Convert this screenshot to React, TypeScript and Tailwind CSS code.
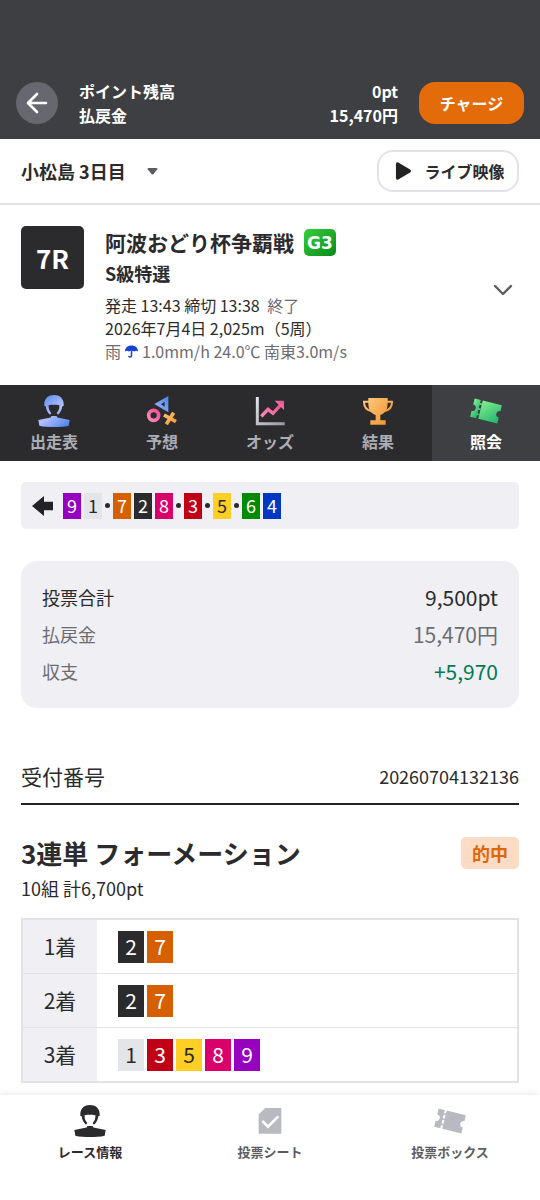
import { useState } from "react"
import clsx from "clsx"

const chipColors: Record<number, string> = {
    1: "bg-[#e4e5e9] text-[#2b2b2d]",
    2: "bg-[#2b2b2d] text-white",
    3: "bg-[#c00015] text-white",
    4: "bg-[#0037c4] text-white",
    5: "bg-[#ffcf26] text-[#2b2b2d]",
    6: "bg-[#008a00] text-white",
    7: "bg-[#d65f00] text-white",
    8: "bg-[#d9006c] text-white",
    9: "bg-[#9600be] text-white",
}

// riders who run side by side share a group
const lineup = [[9, 1], [7, 2, 8], [3], [5], [6, 4]]

const formation = [
    { label: "1着", riders: [2, 7] },
    { label: "2着", riders: [2, 7] },
    { label: "3着", riders: [1, 3, 5, 8, 9] },
]

function RiderIcon({ fill }: { fill: string }) {
    return (
        <svg className="size-8" viewBox="0 0 96 96" fill={fill} aria-hidden="true">
            <path d="M19 33V27C19 10 32 0 48 0s29 10 29 27v6l-5 1c-7-4-16-5-24-5s-17 1-24 5Z" />
            <path d="M23 31h9c-1 10 2 17 8 23l-4 5C29 54 23 43 23 31ZM73 31h-9c1 10-2 17-8 23l4 5c7-5 13-16 13-28Z" />
            <path d="M1 75l33-7 5-1 1-4h16l1 4 5 1 33 7-3 17c-12 3-29 4-44 4S16 95 4 92Z" />
        </svg>
    )
}

function TicketIcon({ fill }: { fill: string }) {
    return (
        <svg className="size-8" viewBox="0 0 96 96" fill={fill} aria-hidden="true">
            <g transform="rotate(14 48 48)">
                <path d="M6 20h19v56H6V58a10 10 0 0 0 0-20Z" />
                <path d="M31 20h59v18a10 10 0 0 0 0 20v18H31Z" />
                <path d="M24 29h8v5h-8ZM24 45h8v5h-8ZM24 61h8v5h-8Z" />
            </g>
        </svg>
    )
}

function ForecastIcon() {
    return (
        <svg className="size-8" viewBox="0 0 96 96" fill="none" aria-hidden="true">
            <path d="M25 27L67 3v49ZM45 28l11 7V20Z" fill="url(#blue)" fillRule="evenodd" />
            <circle cx="23" cy="61" r="15" stroke="url(#pink)" strokeWidth="11" />
            <path d="M54 60l36 20M83 53L61 88" stroke="url(#orange)" strokeWidth="11" />
        </svg>
    )
}

function OddsIcon() {
    return (
        <svg className="size-8" viewBox="0 0 96 96" fill="none" aria-hidden="true">
            <path d="M10 6v80h82" stroke="url(#silver)" strokeWidth="9" />
            <path d="M22 64l20-21 15 12 24-26" stroke="url(#pink)" strokeWidth="10" />
            <path d="M62 17h28v28Z" fill="url(#pink)" />
        </svg>
    )
}

function TrophyIcon() {
    return (
        <svg className="size-8" viewBox="0 0 96 96" fill="none" aria-hidden="true">
            <path d="M22 20H6c0 18 7 25 22 28M74 20h16c0 18-7 25-22 28" stroke="url(#orange)" strokeWidth="6" />
            <path d="M19 9h58v14c0 20-6 31-22 37v16h16v13H25V76h16V60C25 54 19 43 19 23Z" fill="url(#orange)" />
        </svg>
    )
}

function SheetIcon() {
    return (
        <svg className="size-8" viewBox="0 0 96 96" fill="none" aria-hidden="true">
            <path d="M34 9h48v77H14V28Z" fill="#b9b9c2" />
            <path d="M25 48l17 17 31-31" stroke="white" strokeWidth="8" />
        </svg>
    )
}

function Gradients() {
    return (
        <svg className="absolute size-0" aria-hidden="true">
            <defs>
                <linearGradient id="blue" x1="1" y1="0" x2="0" y2="1">
                    <stop stopColor="#4a83ee" />
                    <stop offset="1" stopColor="#a9b8ff" />
                </linearGradient>
                <linearGradient id="rider" gradientUnits="userSpaceOnUse" x1="10" y1="10" x2="80" y2="96">
                    <stop stopColor="#5c8df0" />
                    <stop offset="0.5" stopColor="#b4c0ff" />
                    <stop offset="1" stopColor="#5486ee" />
                </linearGradient>
                <linearGradient id="pink" x1="0" y1="1" x2="1" y2="0">
                    <stop stopColor="#ff8fb5" />
                    <stop offset="1" stopColor="#f04c92" />
                </linearGradient>
                <linearGradient id="orange" x1="0" y1="0" x2="1" y2="1">
                    <stop stopColor="#ffc67a" />
                    <stop offset="1" stopColor="#ef9530" />
                </linearGradient>
                <linearGradient id="silver" x1="0" y1="0" x2="1" y2="1">
                    <stop stopColor="#e4e4ea" />
                    <stop offset="1" stopColor="#9b9ba6" />
                </linearGradient>
                <linearGradient id="green" x1="0" y1="0" x2="1" y2="1">
                    <stop stopColor="#86ee8e" />
                    <stop offset="1" stopColor="#1fb36e" />
                </linearGradient>
            </defs>
        </svg>
    )
}

const tabs = [
    { label: "出走表", icon: <RiderIcon fill="url(#rider)" /> },
    { label: "予想", icon: <ForecastIcon /> },
    { label: "オッズ", icon: <OddsIcon /> },
    { label: "結果", icon: <TrophyIcon /> },
    { label: "照会", icon: <TicketIcon fill="url(#green)" /> },
]

const navItems = [
    { label: "レース情報", icon: <RiderIcon fill="#2b2b2d" />, active: true },
    { label: "投票シート", icon: <SheetIcon />, active: false },
    { label: "投票ボックス", icon: <TicketIcon fill="#b9b9c2" />, active: false },
]

export default function App() {
    const [tab, setTab] = useState("照会")

    return (
        <div className="flex min-h-screen flex-col bg-white font-['Noto_Sans_CJK_JP',sans-serif] text-[#2b2b2d]">
            <Gradients />

            <header className="flex items-center bg-[#3e3f43] px-4 pt-[79px] pb-3 text-white">
                <button aria-label="戻る" className="flex size-[42px] shrink-0 items-center justify-center rounded-full bg-[#67676f]">
                    <svg className="size-6" viewBox="0 0 24 24" fill="none" stroke="currentColor" strokeWidth="2.6" strokeLinecap="round" strokeLinejoin="round">
                        <path d="M21 12H3.500M12 3l-9 9 9 9" />
                    </svg>
                </button>
                <dl className="ml-[21px] grow text-[16px] leading-6 font-bold">
                    <div className="flex justify-between">
                        <dt>ポイント残高</dt>
                        <dd>0pt</dd>
                    </div>
                    <div className="flex justify-between">
                        <dt>払戻金</dt>
                        <dd>15,470円</dd>
                    </div>
                </dl>
                <button className="ml-[21px] h-[42px] w-[105px] rounded-2xl bg-[#e36b09] text-[16px] font-bold">チャージ</button>
            </header>

            <div className="flex items-center justify-between border-b-2 border-[#e2e2e7] px-[21px] py-[11px]">
                <label className="relative flex items-center">
                    <select aria-label="開催日" className="appearance-none bg-transparent pr-9 text-[18px] leading-7 font-bold">
                        <option>小松島 3日目</option>
                    </select>
                    <svg className="pointer-events-none absolute right-1 h-[7px] w-[11px]" viewBox="0 0 12 8">
                        <path d="M1.500 0h9q1.500 0 1 1.500L7 7q-1 1-2 0L.500 1.500Q0 0 1.500 0Z" fill="#5c5c63" />
                    </svg>
                </label>
                <button className="flex h-[42px] w-[142px] items-center justify-center gap-3 rounded-2xl border-2 border-[#e2e2ea] pl-1 text-[16px] font-bold">
                    <svg className="h-5 w-[17px]" viewBox="0 0 18 20">
                        <path d="M1 2.500Q1 0 3.500 1L16 8.500q2 1.500 0 3L3.500 19Q1 20 1 17.500Z" fill="#222224" />
                    </svg>
                    ライブ映像
                </button>
            </div>

            <section className="flex items-start px-[21px] pt-[21px] pb-[22px]">
                <div className="flex size-[63px] shrink-0 items-center justify-center rounded-[5px] bg-[#2b2b2d] text-[26px] font-bold text-white">7R</div>
                <div className="ml-[21px] grow">
                    <div className="flex items-center gap-[10px]">
                        <h1 className="text-[21px] leading-[33px] font-bold">阿波おどり杯争覇戦</h1>
                        <span className="flex h-[27px] w-8 items-center justify-center rounded-[5px] bg-linear-to-br from-[#35cf3a] to-[#078a1c] pt-[2px] font-['DejaVu_Sans',sans-serif] text-[17px] font-bold text-white">G3</span>
                    </div>
                    <h2 className="text-[18px] leading-7 font-bold">S級特選</h2>
                    <div className="mt-[7px] text-[16px] leading-[23px]">
                        <p>発走 13:43 締切 13:38 <span className="ml-1 text-[#6c6c73]">終了</span></p>
                        <p>2026年7月4日 2,025m（5周）</p>
                        <p className="flex items-center gap-1 text-[#6c6c73]">
                            雨
                            <svg className="size-[13px]" viewBox="0 0 26 26">
                                <path d="M0 13C0 5 6 1 13 1s13 4 13 12c-3-2-5-2-7 0-4-2-8-2-12 0-2-2-4-2-7 0Z" fill="#1741d6" />
                                <path d="M13 11v10q0 3-3 3-2 0-3-2" fill="none" stroke="#1741d6" strokeWidth="3" />
                            </svg>
                            <span>1.0mm/h 24.0℃ 南東3.0m/s</span>
                        </p>
                    </div>
                </div>
                <button aria-label="詳細を開く" className="mt-12 flex size-8 items-center justify-center text-[#5c5c63]">
                    <svg className="h-3 w-5" viewBox="0 0 20 12" fill="none" stroke="currentColor" strokeWidth="2.4" strokeLinecap="round" strokeLinejoin="round">
                        <path d="M2 2l8 8 8-8" />
                    </svg>
                </button>
            </section>

            <div role="tablist" className="grid grid-cols-5 bg-[#2b2b2d]">
                {tabs.map((t) => (
                    <button
                        key={t.label}
                        role="tab"
                        aria-selected={tab === t.label}
                        onClick={() => setTab(t.label)}
                        className={clsx(
                            "flex h-[76px] flex-col items-center pt-[10px] text-[16px] leading-7 font-bold",
                            tab === t.label ? "bg-[#3e3f43] text-white" : "text-[#adadb5]"
                        )}
                    >
                        {t.icon}
                        {t.label}
                    </button>
                ))}
            </div>

            <main className="px-[21px] pt-[21px] pb-3">
                <div className="flex h-[47px] items-center rounded-[5px] bg-[#efeff4] pl-[11px]">
                    <svg className="mr-[10px] h-5 w-[21px]" viewBox="0 0 63 60" fill="#222224" aria-hidden="true">
                        <path d="M0 30L36 0v17h27v26H36v17Z" />
                    </svg>
                    {lineup.map((group, i) => (
                        <div key={i} className="flex items-center">
                            {i > 0 && <span className="mx-[3px] size-[5px] rounded-full bg-[#2b2b2d]" />}
                            <div className="flex gap-[3px]">
                                {group.map((n) => (
                                    <span key={n} className={clsx("flex h-[26px] w-[18px] items-center justify-center text-[18px]", chipColors[n])}>{n}</span>
                                ))}
                            </div>
                        </div>
                    ))}
                </div>

                <dl className="mt-8 rounded-2xl bg-[#efeff4] px-[21px] py-[18px]">
                    <div className="flex h-[37px] items-center justify-between">
                        <dt className="text-[18px]">投票合計</dt>
                        <dd className="text-[21px]">9,500pt</dd>
                    </div>
                    <div className="flex h-[37px] items-center justify-between text-[#6c6c73]">
                        <dt className="text-[18px]">払戻金</dt>
                        <dd className="text-[21px]">15,470円</dd>
                    </div>
                    <div className="flex h-[37px] items-center justify-between">
                        <dt className="text-[18px] text-[#6c6c73]">収支</dt>
                        <dd className="text-[21px] text-[#007a55]">+5,970</dd>
                    </div>
                </dl>

                <div className="mt-[50px] flex h-[47px] items-center justify-between border-b-2 border-[#222224] pb-2">
                    <h2 className="text-[21px]">受付番号</h2>
                    <span className="text-[18px]">20260704132136</span>
                </div>

                <div className="mt-7 flex items-center justify-between">
                    <h3 className="text-[26px] leading-10 font-bold">3連単 フォーメーション</h3>
                    <span className="flex h-8 w-[58px] items-center justify-center rounded-[5px] bg-[#fddcc5] text-[18px] font-bold text-[#e0660a]">的中</span>
                </div>
                <p className="text-[18px] leading-[30px]">10組 計6,700pt</p>

                <table className="mt-[15px] w-full border-separate border-spacing-0 border-2 border-[#e2e2e7] text-[21px]">
                    <tbody>
                        {formation.map((row) => (
                            <tr key={row.label} className="group">
                                <th scope="row" className="h-[54px] w-[74px] border-b border-[#e2e2e7] bg-[#efeff4] p-0 font-normal group-last:h-[53px] group-last:border-b-0">{row.label}</th>
                                <td className="border-b border-[#e2e2e7] py-0 pr-0 pl-[21px] group-last:border-b-0">
                                    <div className="flex gap-[3px]">
                                        {row.riders.map((n) => (
                                            <span key={n} className={clsx("flex h-8 w-[26px] items-center justify-center", chipColors[n])}>{n}</span>
                                        ))}
                                    </div>
                                </td>
                            </tr>
                        ))}
                    </tbody>
                </table>
            </main>

            <nav className="sticky bottom-0 mt-auto grid h-[105px] grid-cols-3 bg-white shadow-[0_0_8px_rgba(0,0,0,0.12)]">
                {navItems.map((item) => (
                    <a
                        key={item.label}
                        href="#"
                        className={clsx("flex flex-col items-center pt-[10px] text-[13px] leading-[30px] font-bold", !item.active && "text-[#5c5c63]")}
                    >
                        {item.icon}
                        {item.label}
                    </a>
                ))}
            </nav>
        </div>
    )
}
